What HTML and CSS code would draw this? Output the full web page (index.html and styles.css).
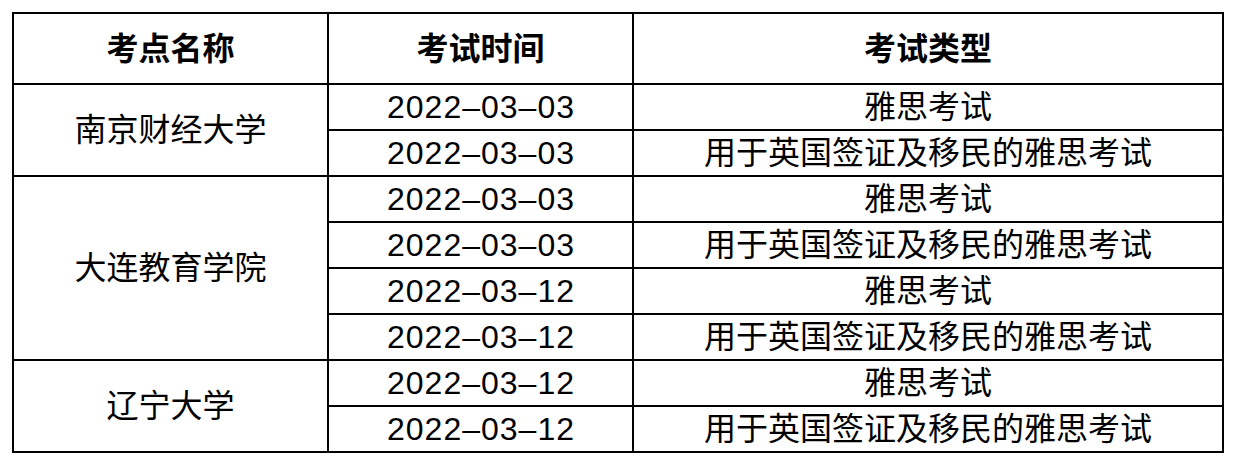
FILE: index.html
```html
<!DOCTYPE html>
<html lang="zh-CN">
<head>
<meta charset="utf-8">
<title>考点</title>
<link rel="stylesheet" href="styles.css">
</head>
<body>
<table class="exam-table">
  <colgroup>
    <col class="c-site">
    <col class="c-date">
    <col class="c-type">
  </colgroup>
  <thead>
    <tr class="head-row">
      <th>考点名称</th>
      <th>考试时间</th>
      <th>考试类型</th>
    </tr>
  </thead>
  <tbody>
    <tr>
      <td rowspan="2">南京财经大学</td>
      <td class="date">2022–03–03</td>
      <td>雅思考试</td>
    </tr>
    <tr>
      <td class="date">2022–03–03</td>
      <td>用于英国签证及移民的雅思考试</td>
    </tr>
    <tr>
      <td rowspan="4">大连教育学院</td>
      <td class="date">2022–03–03</td>
      <td>雅思考试</td>
    </tr>
    <tr>
      <td class="date">2022–03–03</td>
      <td>用于英国签证及移民的雅思考试</td>
    </tr>
    <tr>
      <td class="date">2022–03–12</td>
      <td>雅思考试</td>
    </tr>
    <tr>
      <td class="date">2022–03–12</td>
      <td>用于英国签证及移民的雅思考试</td>
    </tr>
    <tr>
      <td rowspan="2">辽宁大学</td>
      <td class="date">2022–03–12</td>
      <td>雅思考试</td>
    </tr>
    <tr>
      <td class="date">2022–03–12</td>
      <td>用于英国签证及移民的雅思考试</td>
    </tr>
  </tbody>
</table>
</body>
</html>
```

FILE: styles.css
```css
html, body {
  margin: 0;
  padding: 0;
  background: #fff;
}

body {
  padding: 12px 0 0 12px;
  font-family: "Liberation Sans", "Noto Sans CJK SC", sans-serif;
  color: #000;
}

.exam-table {
  border-collapse: collapse;
  table-layout: fixed;
  width: 1210px;
}

.c-site { width: 315px; }
.c-date { width: 305px; }
.c-type { width: 590px; }

.exam-table th,
.exam-table td {
  border: 2px solid #000;
  padding: 0;
  text-align: center;
  vertical-align: middle;
  font-size: 32px;
  line-height: 40px;
  white-space: nowrap;
}

.exam-table th {
  font-weight: 700;
}

.head-row {
  height: 71px;
}

.exam-table tbody tr {
  height: 46px;
}

.exam-table .date {
  letter-spacing: 1px;
  text-indent: 1px;
}
```
